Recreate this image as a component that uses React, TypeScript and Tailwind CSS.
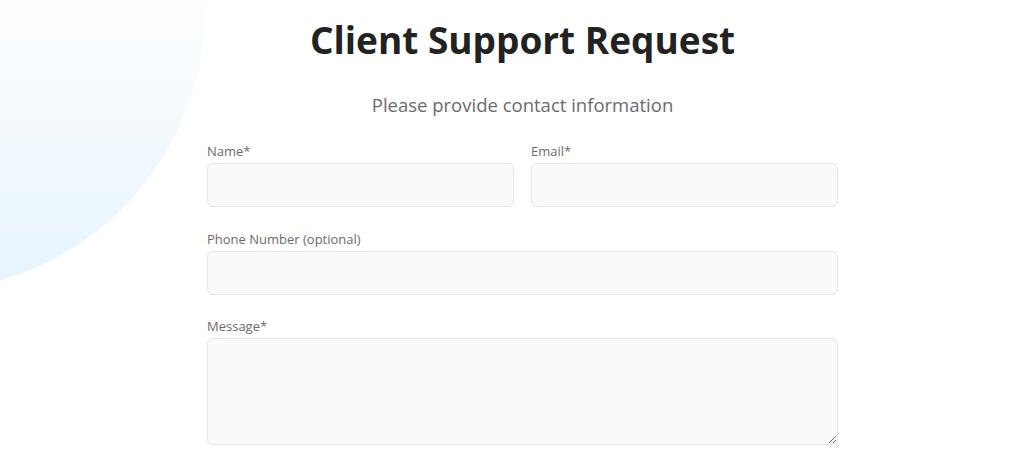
import React from 'react';

const Field: React.FC<{ label: string; className?: string }> = ({ label, className }) => (
  <div className={`flex flex-col ${className || ''}`}>
    <label className="text-[13px] leading-[16px] text-[#6f6a6a] mb-[4px]">{label}</label>
    <input className="h-[44px] w-full rounded-[6px] border border-[#e4e4e4] bg-[#fafafa] outline-none" />
  </div>
);

const App: React.FC = () => {
  return (
    <div className="relative min-h-[470px] overflow-hidden bg-white" style={{ fontFamily: '"Open Sans", sans-serif' }}>
      {/* decorative blob top-left */}
      <div className="absolute left-[-359px] top-[-273px] h-[564px] w-[564px] rounded-full bg-gradient-to-b from-white from-45% to-[#e6f4fd]" />

      <div className="relative pl-[21px]">
        <div className="mx-auto flex w-[631px] flex-col">
          <h1 className="mt-[18px] text-center text-[37px] font-bold leading-[44px] text-[#222]">
            Client Support Request
          </h1>
          <p className="mt-[31px] text-center text-[18.5px] leading-[24px] text-[#6b6b6b]">
            Please provide contact information
          </p>

          <div className="mt-[26px] grid grid-cols-2 gap-x-[17px]">
            <Field label="Name*" />
            <Field label="Email*" />
          </div>
          <Field label="Phone Number (optional)" className="mt-[24px]" />
          <div className="mt-[23px] flex flex-col">
            <label className="text-[13px] leading-[16px] text-[#6f6a6a] mb-[4px]">Message*</label>
            <textarea className="h-[107px] w-full rounded-[6px] border border-[#e4e4e4] bg-[#fafafa] outline-none" />
          </div>
        </div>
      </div>
    </div>
  );
};

export default App;
